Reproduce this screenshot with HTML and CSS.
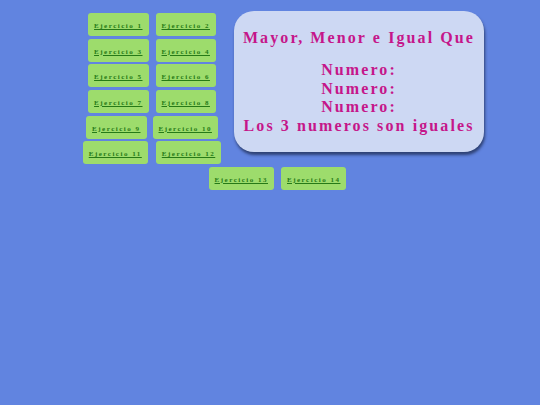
FILE: index.html
```html
<!DOCTYPE html>
<html lang="es">
<head>
<meta charset="utf-8">
<title>Mayor, Menor e Igual Que</title>
<link rel="stylesheet" href="styles.css">
</head>
<body>
<div class="page">
  <div class="top">
    <nav class="menu">
      <div class="row"><a class="btn" href="#">Ejercicio 1</a><a class="btn" href="#">Ejercicio 2</a></div>
      <div class="row"><a class="btn" href="#">Ejercicio 3</a><a class="btn" href="#">Ejercicio 4</a></div>
      <div class="row"><a class="btn" href="#">Ejercicio 5</a><a class="btn" href="#">Ejercicio 6</a></div>
      <div class="row"><a class="btn" href="#">Ejercicio 7</a><a class="btn" href="#">Ejercicio 8</a></div>
      <div class="row row-narrow"><a class="btn" href="#">Ejercicio 9</a><a class="btn" href="#">Ejercicio 10</a></div>
      <div class="row row-wide"><a class="btn" href="#">Ejercicio 11</a><a class="btn" href="#">Ejercicio 12</a></div>
    </nav>
    <section class="panel">
      <h1 class="title">Mayor, Menor e Igual Que</h1>
      <div class="lines">
        <p class="line">Numero:</p>
        <p class="line">Numero:</p>
        <p class="line">Numero:</p>
        <p class="line">Los 3 numeros son iguales</p>
      </div>
    </section>
  </div>
  <div class="row bottom"><a class="btn" href="#">Ejercicio 13</a><a class="btn" href="#">Ejercicio 14</a></div>
</div>
</body>
</html>
```

FILE: styles.css
```css
html, body {
  margin: 0;
  padding: 0;
}

body {
  background: #6184e0;
  width: 540px;
  height: 405px;
  font-family: "Liberation Serif", "Times New Roman", serif;
}

.page {
  padding-top: 11px;
}

.top {
  display: flex;
  align-items: flex-start;
  padding-left: 82px;
}

.menu {
  width: 140px;
  padding-top: 2px;
  display: flex;
  flex-direction: column;
  gap: 2.67px;
}

.row {
  display: flex;
  justify-content: center;
  gap: 7px;
}

.row-narrow {
  gap: 6px;
}

.row-wide {
  gap: 8px;
}

.btn {
  display: block;
  height: 20px;
  line-height: 20px;
  padding: 3px 6px 0;
  background: #9ddc6c;
  border-radius: 3px;
  color: #267a17;
  font-size: 7px;
  font-weight: bold;
  letter-spacing: 1.5px;
  text-decoration: underline;
  white-space: nowrap;
}

.bottom {
  margin-top: 2.67px;
  padding-left: 15px;
}

.panel {
  margin-left: 12px;
  width: 250px;
  height: 141px;
  box-sizing: border-box;
  padding-top: 18px;
  background: #cdd8f3;
  border-radius: 20px;
  box-shadow: 1px 3px 3px rgba(20, 30, 60, 0.65);
  text-align: center;
  color: #c5168a;
}

.title {
  margin: 0;
  font-size: 16px;
  line-height: 18px;
  font-weight: bold;
  letter-spacing: 2.1px;
}

.lines {
  margin-top: 14px;
}

.line {
  margin: 0;
  font-size: 16px;
  line-height: 18.5px;
  font-weight: bold;
  letter-spacing: 2.1px;
}
```
